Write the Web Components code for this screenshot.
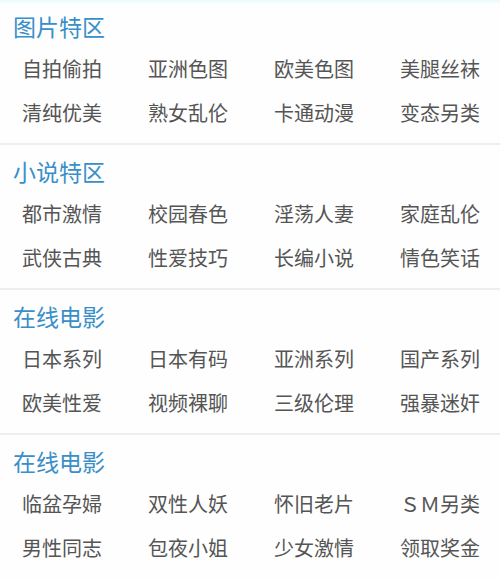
<!DOCTYPE html>
<html lang="zh-CN">
<head>
<meta charset="utf-8">
<meta name="viewport" content="width=device-width, initial-scale=1">
<title>导航</title>
<style>
  body {
    margin: 0;
    background: #fefefe;
    color: #555;
    font-family: "Noto Sans CJK SC", sans-serif;
  }
</style>
</head>
<body>
<nav-board>
  <nav-section heading="图片特区">
    <nav-item>自拍偷拍</nav-item>
    <nav-item>亚洲色图</nav-item>
    <nav-item>欧美色图</nav-item>
    <nav-item>美腿丝袜</nav-item>
    <nav-item>清纯优美</nav-item>
    <nav-item>熟女乱伦</nav-item>
    <nav-item>卡通动漫</nav-item>
    <nav-item>变态另类</nav-item>
  </nav-section>
  <nav-section heading="小说特区">
    <nav-item>都市激情</nav-item>
    <nav-item>校园春色</nav-item>
    <nav-item>淫荡人妻</nav-item>
    <nav-item>家庭乱伦</nav-item>
    <nav-item>武侠古典</nav-item>
    <nav-item>性爱技巧</nav-item>
    <nav-item>长编小说</nav-item>
    <nav-item>情色笑话</nav-item>
  </nav-section>
  <nav-section heading="在线电影">
    <nav-item>日本系列</nav-item>
    <nav-item>日本有码</nav-item>
    <nav-item>亚洲系列</nav-item>
    <nav-item>国产系列</nav-item>
    <nav-item>欧美性爱</nav-item>
    <nav-item>视频裸聊</nav-item>
    <nav-item>三级伦理</nav-item>
    <nav-item>强暴迷奸</nav-item>
  </nav-section>
  <nav-section heading="在线电影">
    <nav-item>临盆孕婦</nav-item>
    <nav-item>双性人妖</nav-item>
    <nav-item>怀旧老片</nav-item>
    <nav-item>ＳＭ另类</nav-item>
    <nav-item>男性同志</nav-item>
    <nav-item>包夜小姐</nav-item>
    <nav-item>少女激情</nav-item>
    <nav-item>领取奖金</nav-item>
  </nav-section>
</nav-board>

<script>
class NavBoard extends HTMLElement {
  constructor() {
    super();
    const shadow = this.attachShadow({ mode: 'open' });
    shadow.innerHTML = `
      <style>
        :host { display: block; }
        nav {
          display: flex;
          flex-direction: column;
          background: linear-gradient(#e6fbfa, transparent 4px);
        }
      </style>
      <nav><slot></slot></nav>
    `;
  }
}

class NavSection extends HTMLElement {
  constructor() {
    super();
    const shadow = this.attachShadow({ mode: 'open' });
    shadow.innerHTML = `
      <style>
        :host {
          display: block;
          padding: 6px 0 8px;
          border-bottom: 2px solid #eee;
        }
        :host(:last-of-type) { border-bottom: 0; }
        h2 {
          margin: 0 0 1px;
          padding: 0 13px;
          color: #3a8fc8;
          font-size: 23px;
          font-weight: 400;
          line-height: 40px;
        }
        .grid {
          display: grid;
          grid-template-columns: repeat(4, auto);
          justify-content: space-between;
          padding: 0 20px 0 22px;
        }
      </style>
      <h2></h2>
      <div class="grid"><slot></slot></div>
    `;
  }

  connectedCallback() {
    this.shadowRoot.querySelector('h2').textContent = this.getAttribute('heading');
  }
}

class NavItem extends HTMLElement {
  constructor() {
    super();
    const shadow = this.attachShadow({ mode: 'open' });
    shadow.innerHTML = `
      <style>
        :host { display: block; }
        a {
          display: block;
          color: inherit;
          font-size: 20px;
          line-height: 44px;
          text-align: center;
          text-decoration: none;
          white-space: nowrap;
        }
      </style>
      <a href="#"><slot></slot></a>
    `;
  }
}

customElements.define('nav-board', NavBoard);
customElements.define('nav-section', NavSection);
customElements.define('nav-item', NavItem);
</script>
</body>
</html>
